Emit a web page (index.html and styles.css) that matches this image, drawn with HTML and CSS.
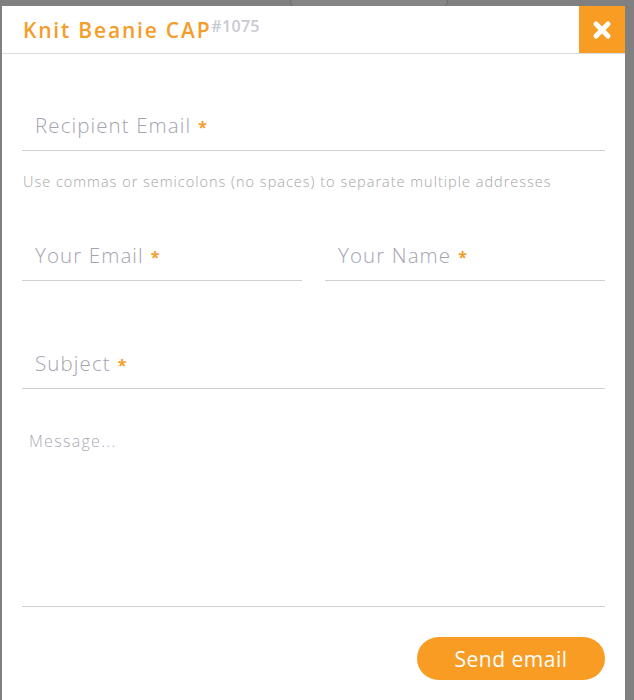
FILE: index.html
```html
<!DOCTYPE html>
<html>
<head>
    <meta charset="utf-8">
    <meta name="viewport" content="width=device-width, initial-scale=1">
    <title>Send to a friend</title>
    <link rel="stylesheet" href="styles.css">
</head>
<body>
    <div class="behind-tab"></div>

    <div class="modal">
        <div class="modal-header">
            <h2 class="modal-title">Knit Beanie CAP<sup class="sku">#1075</sup></h2>
            <button class="close-btn" aria-label="Close">
                <svg width="20" height="20" viewBox="0 0 20 20">
                    <path d="M4 4 L16 16 M16 4 L4 16" stroke="#fff" stroke-width="5" stroke-linecap="round"/>
                </svg>
            </button>
        </div>

        <form class="modal-body">
            <div class="field">
                <label class="field-label">Recipient Email<span class="req">*</span></label>
            </div>
            <p class="hint">Use commas or semicolons (no spaces) to separate multiple addresses</p>

            <div class="row">
                <div class="field">
                    <label class="field-label">Your Email<span class="req">*</span></label>
                </div>
                <div class="field">
                    <label class="field-label">Your Name<span class="req">*</span></label>
                </div>
            </div>

            <div class="field field-subject">
                <label class="field-label">Subject<span class="req">*</span></label>
            </div>

            <div class="message">Message...</div>

            <div class="actions">
                <button type="button" class="send-btn">Send email</button>
            </div>
        </form>
    </div>
</body>
</html>
```

FILE: styles.css
```css
body {
    margin: 0;
    background-color: #808080;
    font-family: "Open Sans", "Liberation Sans", sans-serif;
    overflow: hidden;
}
.behind-tab {
    position: absolute;
    top: -8px;
    left: 290px;
    width: 156px;
    height: 13px;
    border: 1px solid #6e6e6e;
    border-radius: 5px;
    background-color: #858585;
}
.modal {
    position: relative;
    margin: 6px 0 0 2px;
    width: 623px;
    height: 694px;
    background-color: #fff;
}
.modal-header {
    display: flex;
    justify-content: space-between;
    height: 47px;
    border-bottom: 1px solid #dcdcdc;
}
.modal-title {
    margin: 0;
    padding: 9px 0 0 21px;
    font-size: 21px;
    font-weight: 600;
    letter-spacing: 1.8px;
    color: #f59d2a;
}
.sku {
    font-size: 16px;
    letter-spacing: 0.3px;
    color: #c9c9d2;
    vertical-align: 6px;
}
.close-btn {
    width: 46px;
    height: 47px;
    border: none;
    background-color: #f89c24;
    display: flex;
    align-items: center;
    justify-content: center;
    padding: 0;
}
.modal-body {
    padding: 44px 20px 0 20px;
}
.field {
    flex: 1;
    height: 52px;
    border-bottom: 1px solid #d0d0d4;
    display: flex;
    align-items: center;
}
.field-label {
    padding: 2px 0 0 13px;
    font-size: 20.5px;
    font-weight: 300;
    letter-spacing: 1.1px;
    color: #a3a3b2;
}
.req {
    color: #f59d2a;
    font-weight: 700;
    font-size: 16px;
    margin-left: 7px;
}
.hint {
    margin: 21px 0 0 1px;
    font-size: 14.5px;
    letter-spacing: 1px;
    color: #a5a5a5;
    font-weight: 300;
}
.row {
    display: flex;
    gap: 23px;
    margin-top: 37px;
}
.field-subject {
    margin-top: 55px;
}
.message {
    height: 218px;
    border-bottom: 1px solid #d0d0d4;
    padding: 41px 0 0 7px;
    box-sizing: border-box;
    font-size: 16px;
    letter-spacing: 1.3px;
    color: #a9a9b4;
    font-weight: 300;
}
.actions {
    display: flex;
    justify-content: flex-end;
    margin-top: 30px;
}
.send-btn {
    width: 188px;
    height: 43px;
    border: none;
    border-radius: 22px;
    background-color: #f89c24;
    color: #fff;
    font-family: inherit;
    font-size: 21px;
    letter-spacing: 0.5px;
}
```
